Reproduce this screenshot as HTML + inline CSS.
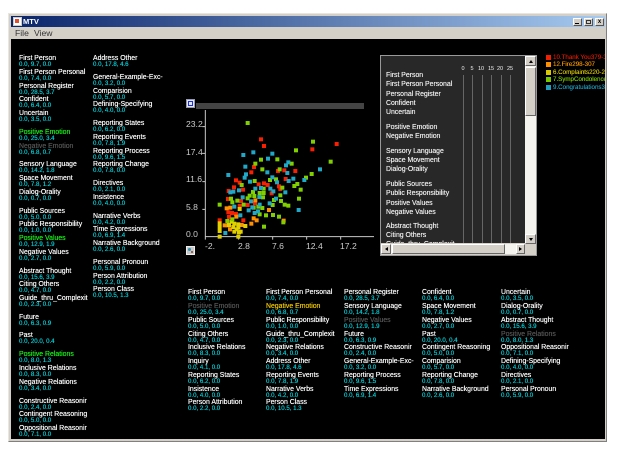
<!DOCTYPE html>
<html><head><meta charset="utf-8"><style>
html,body{margin:0;padding:0;background:#fff;width:628px;height:453px;overflow:hidden}
body{filter:blur(.3px)}
div,span{position:absolute;box-sizing:border-box}
#win{left:8px;top:13px;width:599px;height:429px;background:#d4d0c8;border:1px solid #e8e6e0;border-right-color:#808080;border-bottom-color:#808080}
#tb{left:11px;top:16px;width:594px;height:11px;background:linear-gradient(90deg,#0a246a,#a6caf0)}
#blk{left:11px;top:39px;width:594px;height:400px;background:#000}
.t{font:bold 7.5px "Liberation Sans",sans-serif;color:#fff;white-space:nowrap}
.m{font:8.6px "Liberation Sans",sans-serif;color:#333;top:28px;line-height:11px}
.b{width:9px;height:8px;top:18px;background:#d4d0c8;border:1px solid #fff;border-right-color:#555;border-bottom-color:#555;font:bold 6px/6px "Liberation Sans",sans-serif;color:#000;text-align:center}
.e{font:6.9px/6.3px "Liberation Sans",sans-serif;color:#fff;white-space:nowrap;margin-top:.8px;text-shadow:0 0 .4px currentColor}
.e i{display:block;font-style:normal;font-size:6.1px;color:#00d0d8;text-shadow:0 0 .4px #00d0d8}
.e.g{color:#18f018}.e.d{color:#555}.e.o{color:#f0c800}
.p{font:6.9px/9px "Liberation Sans",sans-serif;color:#eee;left:386px;white-space:nowrap;text-shadow:0 0 .4px #eee}
.h{font:5.5px/7px "Liberation Sans",sans-serif;color:#eee;top:66px;width:12px;text-align:center}
.v{top:75px;height:168px;width:1px;background:#666}
.y{font:8.6px/10px "Liberation Sans",sans-serif;color:#ccc;white-space:nowrap}
.lg{font:6.2px/7px "Liberation Sans",sans-serif;left:553px;white-space:nowrap;text-shadow:0 0 .3px currentColor}
.sq{left:546px;width:5px;height:5px}
.sb{background:#d4d0c8;border:1px solid #fff;border-right-color:#666;border-bottom-color:#666}
svg rect{width:12px;height:12px}
</style></head><body>
<div id="win"></div>
<div id="tb"></div>
<div style="left:13px;top:17px;width:9px;height:9px;background:#fff;border:1px solid #ccc"></div>
<div style="left:15px;top:19px;width:4px;height:4px;background:#e05030"></div>
<div class="t" style="left:23px;top:17px;line-height:9px">MTV</div>
<div class="b" style="left:573px"></div><div style="left:575px;top:23px;width:4px;height:1px;background:#000"></div>
<div class="b" style="left:584px"></div><div style="left:586px;top:20px;width:5px;height:4px;border:1px solid #333"></div>
<div class="b" style="left:595px">x</div>
<div class="m" style="left:15px">File</div><div class="m" style="left:34px">View</div>
<div id="blk"></div>

<div class="e" style="left:19px;top:55px">First Person<i>0.0, 9.7, 0.0</i></div>
<div class="e" style="left:19px;top:69px">First Person Personal<i>0.0, 7.4, 0.0</i></div>
<div class="e" style="left:19px;top:83px">Personal Register<i>0.0, 28.5, 3.7</i></div>
<div class="e" style="left:19px;top:96px">Confident<i>0.0, 6.4, 0.0</i></div>
<div class="e" style="left:19px;top:110px">Uncertain<i>0.0, 3.5, 0.0</i></div>
<div class="e g" style="left:19px;top:129px">Positive Emotion<i>0.0, 25.0, 3.4</i></div>
<div class="e d" style="left:19px;top:143px">Negative Emotion<i>0.0, 6.8, 0.7</i></div>
<div class="e" style="left:19px;top:161px">Sensory Language<i>0.0, 14.2, 1.8</i></div>
<div class="e" style="left:19px;top:175px">Space Movement<i>0.0, 7.8, 1.2</i></div>
<div class="e" style="left:19px;top:189px">Dialog-Orality<i>0.0, 0.7, 0.0</i></div>
<div class="e" style="left:19px;top:208px">Public Sources<i>0.0, 5.0, 0.0</i></div>
<div class="e" style="left:19px;top:221px">Public Responsibility<i>0.0, 1.0, 0.0</i></div>
<div class="e g" style="left:19px;top:235px">Positive Values<i>0.0, 12.9, 1.9</i></div>
<div class="e" style="left:19px;top:249px">Negative Values<i>0.0, 2.7, 0.0</i></div>
<div class="e" style="left:19px;top:268px">Abstract Thought<i>0.0, 15.6, 3.9</i></div>
<div class="e" style="left:19px;top:281px">Citing Others<i>0.0, 4.7, 0.0</i></div>
<div class="e" style="left:19px;top:295px">Guide_thru_Complexit<i>0.0, 2.3, 0.0</i></div>
<div class="e" style="left:19px;top:314px">Future<i>0.0, 6.3, 0.9</i></div>
<div class="e" style="left:19px;top:332px">Past<i>0.0, 20.0, 0.4</i></div>
<div class="e g" style="left:19px;top:351px">Positive Relations<i>0.0, 8.0, 1.3</i></div>
<div class="e" style="left:19px;top:365px">Inclusive Relations<i>0.0, 8.3, 0.0</i></div>
<div class="e" style="left:19px;top:379px">Negative Relations<i>0.0, 3.4, 0.0</i></div>
<div class="e" style="left:19px;top:398px">Constructive Reasonir<i>0.0, 2.4, 0.0</i></div>
<div class="e" style="left:19px;top:411px">Contingent Reasoning<i>0.0, 5.0, 0.0</i></div>
<div class="e" style="left:19px;top:425px">Oppositional Reasonir<i>0.0, 7.1, 0.0</i></div>

<div class="e" style="left:93px;top:55px">Address Other<i>0.0, 17.8, 4.6</i></div>
<div class="e" style="left:93px;top:74px">General-Example-Exc-<i>0.0, 3.2, 0.0</i></div>
<div class="e" style="left:93px;top:88px">Comparision<i>0.0, 5.7, 0.0</i></div>
<div class="e" style="left:93px;top:101px">Defining-Specifying<i>0.0, 4.0, 0.0</i></div>
<div class="e" style="left:93px;top:120px">Reporting States<i>0.0, 6.2, 0.0</i></div>
<div class="e" style="left:93px;top:134px">Reporting Events<i>0.0, 7.8, 1.9</i></div>
<div class="e" style="left:93px;top:148px">Reporting Process<i>0.0, 9.6, 1.5</i></div>
<div class="e" style="left:93px;top:161px">Reporting Change<i>0.0, 7.8, 0.0</i></div>
<div class="e" style="left:93px;top:180px">Directives<i>0.0, 2.1, 0.0</i></div>
<div class="e" style="left:93px;top:194px">Insistence<i>0.0, 4.0, 0.0</i></div>
<div class="e" style="left:93px;top:213px">Narrative Verbs<i>0.0, 4.2, 0.0</i></div>
<div class="e" style="left:93px;top:226px">Time Expressions<i>0.0, 6.9, 1.4</i></div>
<div class="e" style="left:93px;top:240px">Narrative Background<i>0.0, 2.6, 0.0</i></div>
<div class="e" style="left:93px;top:259px">Personal Pronoun<i>0.0, 5.9, 0.0</i></div>
<div class="e" style="left:93px;top:273px">Person Attribution<i>0.0, 2.2, 0.0</i></div>
<div class="e" style="left:93px;top:286px">Person Class<i>0.0, 10.5, 1.3</i></div>

<div style="left:186px;top:99px;width:9px;height:9px;background:#dfe6f8;border:1px solid #99a"></div>
<div style="left:188px;top:101px;width:5px;height:5px;border:1px solid #2030d0"></div>
<div style="left:196px;top:103px;width:168px;height:6px;background:#444"></div>
<div style="left:186px;top:246px;width:9px;height:9px;background:#c8c8c8;border:1px solid #eee"></div>
<div style="left:188px;top:248px;width:3px;height:3px;background:#3090b0;border-radius:2px"></div>
<div style="left:191px;top:251px;width:2px;height:2px;background:#a06050"></div>

<svg style="position:absolute;left:175px;top:90px" width="200" height="170" viewBox="0 0 600 510">
<path d="M91 60V440M91 440H597M82 110H91M82 190H91M82 275H91M82 358H91M191 440V449M293 440V449M395 440V449M497 440V449M91 440V449" stroke="#c8c8c8" stroke-width="3" fill="none"/>
<g fill="#f82000" transform="translate(-6 -6)">
<rect x="258" y="148"/><rect x="267" y="168"/><rect x="485" y="162"/><rect x="412" y="178"/><rect x="237" y="231"/><rect x="229" y="247"/><rect x="361" y="243"/><rect x="309" y="243"/><rect x="328" y="241"/><rect x="183" y="271"/><rect x="194" y="278"/><rect x="177" y="292"/><rect x="204" y="299"/><rect x="161" y="303"/><rect x="159" y="327"/><rect x="198" y="333"/><rect x="194" y="348"/><rect x="160" y="367"/><rect x="171" y="369"/><rect x="134" y="391"/><rect x="162" y="381"/><rect x="205" y="391"/><rect x="267" y="280"/><rect x="251" y="283"/><rect x="278" y="285"/><rect x="312" y="289"/><rect x="332" y="267"/><rect x="290" y="310"/><rect x="316" y="297"/><rect x="240" y="340"/><rect x="183" y="372"/><rect x="218" y="345"/>
</g>
<g fill="#ff9000" transform="translate(-6 -6)">
<rect x="155" y="355"/><rect x="166" y="353"/><rect x="184" y="380"/><rect x="149" y="406"/><rect x="241" y="331"/><rect x="282" y="360"/><rect x="236" y="385"/><rect x="229" y="401"/><rect x="245" y="391"/><rect x="165" y="418"/><rect x="200" y="405"/><rect x="158" y="406"/><rect x="326" y="392"/>
</g>
<g fill="#e0d000" transform="translate(-6 -6)">
<rect x="194" y="357"/><rect x="134" y="400"/><rect x="134" y="411"/><rect x="134" y="423"/><rect x="134" y="440"/><rect x="162" y="405"/><rect x="175" y="411"/><rect x="178" y="401"/><rect x="190" y="403"/><rect x="190" y="412"/><rect x="211" y="408"/><rect x="192" y="427"/><rect x="190" y="440"/><rect x="178" y="425"/><rect x="170" y="395"/><rect x="185" y="418"/><rect x="197" y="425"/>
</g>
<g fill="#80d000" transform="translate(-6 -6)">
<rect x="218" y="99"/><rect x="414" y="155"/><rect x="363" y="181"/><rect x="467" y="215"/><rect x="258" y="209"/><rect x="307" y="208"/><rect x="241" y="221"/><rect x="350" y="221"/><rect x="262" y="238"/><rect x="314" y="238"/><rect x="410" y="252"/><rect x="393" y="263"/><rect x="367" y="282"/><rect x="358" y="288"/><rect x="377" y="299"/><rect x="322" y="293"/><rect x="316" y="316"/><rect x="372" y="326"/><rect x="318" y="333"/><rect x="329" y="344"/><rect x="340" y="347"/><rect x="134" y="344"/><rect x="168" y="326"/><rect x="172" y="337"/><rect x="187" y="332"/><rect x="206" y="344"/><rect x="224" y="317"/><rect x="234" y="306"/><rect x="238" y="318"/><rect x="200" y="285"/><rect x="239" y="273"/><rect x="285" y="270"/><rect x="303" y="268"/><rect x="254" y="309"/><rect x="266" y="309"/><rect x="264" y="322"/><rect x="297" y="330"/><rect x="293" y="345"/><rect x="262" y="354"/><rect x="254" y="373"/><rect x="273" y="376"/><rect x="294" y="375"/><rect x="312" y="380"/><rect x="325" y="397"/><rect x="267" y="410"/><rect x="157" y="393"/><rect x="172" y="388"/><rect x="218" y="325"/><rect x="266" y="296"/><rect x="250" y="350"/><rect x="236" y="353"/>
</g>
<g fill="#20a8c8" transform="translate(-6 -6)">
<rect x="205" y="195"/><rect x="235" y="187"/><rect x="292" y="191"/><rect x="279" y="206"/><rect x="340" y="217"/><rect x="333" y="226"/><rect x="337" y="249"/><rect x="277" y="247"/><rect x="211" y="230"/><rect x="213" y="253"/><rect x="209" y="263"/><rect x="160" y="255"/><rect x="225" y="275"/><rect x="292" y="262"/><rect x="306" y="277"/><rect x="355" y="266"/><rect x="341" y="273"/><rect x="388" y="270"/><rect x="435" y="238"/><rect x="241" y="296"/><rect x="258" y="294"/><rect x="286" y="296"/><rect x="295" y="304"/><rect x="331" y="307"/><rect x="166" y="307"/><rect x="192" y="301"/><rect x="203" y="322"/><rect x="253" y="321"/><rect x="228" y="334"/><rect x="284" y="340"/><rect x="303" y="326"/><rect x="254" y="344"/><rect x="232" y="352"/><rect x="178" y="350"/><rect x="221" y="361"/><rect x="239" y="369"/><rect x="249" y="364"/><rect x="196" y="376"/><rect x="371" y="360"/><rect x="151" y="429"/><rect x="175" y="305"/>
</g>
</svg>
<div class="y" style="left:186px;top:119px">23.2</div>
<div class="y" style="left:186px;top:147px">17.4</div>
<div class="y" style="left:186px;top:174px">11.6</div>
<div class="y" style="left:186px;top:202px">5.8</div>
<div class="y" style="left:186px;top:229px">0.0</div>
<div class="y" style="left:205px;top:241px">-2.</div>
<div class="y" style="left:238px;top:241px">2.8</div>
<div class="y" style="left:272px;top:241px">7.6</div>
<div class="y" style="left:306px;top:241px">12.4</div>
<div class="y" style="left:340px;top:241px">17.2</div>

<div style="left:380px;top:55px;width:157px;height:201px;background:#d4d0c8;border:1px solid #999"></div>
<div style="left:381px;top:56px;width:144px;height:187px;background:#282828"></div>
<div class="h" style="left:457px">0</div><div class="h" style="left:466px">5</div><div class="h" style="left:475px">10</div><div class="h" style="left:485px">15</div><div class="h" style="left:494px">20</div><div class="h" style="left:504px">25</div>
<div class="v" style="left:463px"></div><div class="v" style="left:472px"></div><div class="v" style="left:482px"></div><div class="v" style="left:491px"></div><div class="v" style="left:501px"></div><div class="v" style="left:510px"></div>
<div class="p" style="top:71px">First Person</div>
<div class="p" style="top:80px">First Person Personal</div>
<div class="p" style="top:90px">Personal Register</div>
<div class="p" style="top:99px">Confident</div>
<div class="p" style="top:108px">Uncertain</div>
<div class="p" style="top:123px">Positive Emotion</div>
<div class="p" style="top:132px">Negative Emotion</div>
<div class="p" style="top:147px">Sensory Language</div>
<div class="p" style="top:156px">Space Movement</div>
<div class="p" style="top:165px">Dialog-Orality</div>
<div class="p" style="top:180px">Public Sources</div>
<div class="p" style="top:189px">Public Responsibility</div>
<div class="p" style="top:199px">Positive Values</div>
<div class="p" style="top:208px">Negative Values</div>
<div class="p" style="top:222px">Abstract Thought</div>
<div class="p" style="top:231px">Citing Others</div>
<div class="p" style="top:240px;height:3px;overflow:hidden">Guide_thru_Complexit</div>
<div style="left:525px;top:56px;width:11px;height:187px;background:#f4f3ee"></div>
<div class="sb" style="left:525px;top:56px;width:11px;height:10px"></div>
<div style="left:529px;top:60px;border:2.5px solid transparent;border-bottom:3px solid #000;border-top:0"></div>
<div class="sb" style="left:525px;top:67px;width:11px;height:49px"></div>
<div class="sb" style="left:525px;top:234px;width:11px;height:10px"></div>
<div style="left:529px;top:238px;border:2.5px solid transparent;border-top:3px solid #000;border-bottom:0"></div>
<div style="left:381px;top:244px;width:144px;height:10px;background:#f4f3ee"></div>
<div class="sb" style="left:381px;top:244px;width:10px;height:10px"></div>
<div style="left:385px;top:247px;border:2.5px solid transparent;border-right:3px solid #000;border-left:0"></div>
<div class="sb" style="left:392px;top:244px;width:113px;height:10px"></div>
<div class="sb" style="left:516px;top:244px;width:9px;height:10px"></div>
<div style="left:519px;top:247px;border:2.5px solid transparent;border-left:3px solid #000;border-right:0"></div>

<div class="sq" style="top:55px;background:#f02000"></div><div class="lg" style="top:54px;width:52px;overflow:hidden;color:#d01800">10.Thank You379-386</div>
<div class="sq" style="top:62px;background:#ff9000"></div><div class="lg" style="top:61px;width:52px;overflow:hidden;color:#f09000">12.Fire298-307</div>
<div class="sq" style="top:70px;background:#d8c800"></div><div class="lg" style="top:69px;width:52px;overflow:hidden;color:#d8c800">6.Complaints220-233</div>
<div class="sq" style="top:77px;background:#78c800"></div><div class="lg" style="top:76px;width:52px;overflow:hidden;color:#78c800">7.SympCondolence3</div>
<div class="sq" style="top:85px;background:#20a0c0"></div><div class="lg" style="top:84px;width:52px;overflow:hidden;color:#20a0c0">9.Congratulations364</div>

<div class="e" style="left:188px;top:289px">First Person<i>0.0, 9.7, 0.0</i></div>
<div class="e d" style="left:188px;top:303px">Positive Emotion<i>0.0, 25.0, 3.4</i></div>
<div class="e" style="left:188px;top:317px">Public Sources<i>0.0, 5.0, 0.0</i></div>
<div class="e" style="left:188px;top:331px">Citing Others<i>0.0, 4.7, 0.0</i></div>
<div class="e" style="left:188px;top:344px">Inclusive Relations<i>0.0, 8.3, 0.0</i></div>
<div class="e" style="left:188px;top:358px">Inquiry<i>0.0, 4.1, 0.0</i></div>
<div class="e" style="left:188px;top:372px">Reporting States<i>0.0, 6.2, 0.0</i></div>
<div class="e" style="left:188px;top:386px">Insistence<i>0.0, 4.0, 0.0</i></div>
<div class="e" style="left:188px;top:399px">Person Attribution<i>0.0, 2.2, 0.0</i></div>

<div class="e" style="left:266px;top:289px">First Person Personal<i>0.0, 7.4, 0.0</i></div>
<div class="e o" style="left:266px;top:303px">Negative Emotion<i>0.0, 6.8, 0.7</i></div>
<div class="e" style="left:266px;top:317px">Public Responsibility<i>0.0, 1.0, 0.0</i></div>
<div class="e" style="left:266px;top:331px">Guide_thru_Complexit<i>0.0, 2.3, 0.0</i></div>
<div class="e" style="left:266px;top:344px">Negative Relations<i>0.0, 3.4, 0.0</i></div>
<div class="e" style="left:266px;top:358px">Address Other<i>0.0, 17.8, 4.6</i></div>
<div class="e" style="left:266px;top:372px">Reporting Events<i>0.0, 7.8, 1.9</i></div>
<div class="e" style="left:266px;top:386px">Narrative Verbs<i>0.0, 4.2, 0.0</i></div>
<div class="e" style="left:266px;top:399px">Person Class<i>0.0, 10.5, 1.3</i></div>

<div class="e" style="left:344px;top:289px">Personal Register<i>0.0, 28.5, 3.7</i></div>
<div class="e" style="left:344px;top:303px">Sensory Language<i>0.0, 14.2, 1.8</i></div>
<div class="e d" style="left:344px;top:317px">Positive Values<i>0.0, 12.9, 1.9</i></div>
<div class="e" style="left:344px;top:331px">Future<i>0.0, 6.3, 0.9</i></div>
<div class="e" style="left:344px;top:344px">Constructive Reasonir<i>0.0, 2.4, 0.0</i></div>
<div class="e" style="left:344px;top:358px">General-Example-Exc-<i>0.0, 3.2, 0.0</i></div>
<div class="e" style="left:344px;top:372px">Reporting Process<i>0.0, 9.6, 1.5</i></div>
<div class="e" style="left:344px;top:386px">Time Expressions<i>0.0, 6.9, 1.4</i></div>

<div class="e" style="left:422px;top:289px">Confident<i>0.0, 6.4, 0.0</i></div>
<div class="e" style="left:422px;top:303px">Space Movement<i>0.0, 7.8, 1.2</i></div>
<div class="e" style="left:422px;top:317px">Negative Values<i>0.0, 2.7, 0.0</i></div>
<div class="e" style="left:422px;top:331px">Past<i>0.0, 20.0, 0.4</i></div>
<div class="e" style="left:422px;top:344px">Contingent Reasoning<i>0.0, 5.0, 0.0</i></div>
<div class="e" style="left:422px;top:358px">Comparision<i>0.0, 5.7, 0.0</i></div>
<div class="e" style="left:422px;top:372px">Reporting Change<i>0.0, 7.8, 0.0</i></div>
<div class="e" style="left:422px;top:386px">Narrative Background<i>0.0, 2.6, 0.0</i></div>

<div class="e" style="left:501px;top:289px">Uncertain<i>0.0, 3.5, 0.0</i></div>
<div class="e" style="left:501px;top:303px">Dialog-Orality<i>0.0, 0.7, 0.0</i></div>
<div class="e" style="left:501px;top:317px">Abstract Thought<i>0.0, 15.6, 3.9</i></div>
<div class="e d" style="left:501px;top:331px">Positive Relations<i>0.0, 8.0, 1.3</i></div>
<div class="e" style="left:501px;top:344px">Oppositional Reasonir<i>0.0, 7.1, 0.0</i></div>
<div class="e" style="left:501px;top:358px">Defining-Specifying<i>0.0, 4.0, 0.0</i></div>
<div class="e" style="left:501px;top:372px">Directives<i>0.0, 2.1, 0.0</i></div>
<div class="e" style="left:501px;top:386px">Personal Pronoun<i>0.0, 5.9, 0.0</i></div>
</body></html>
